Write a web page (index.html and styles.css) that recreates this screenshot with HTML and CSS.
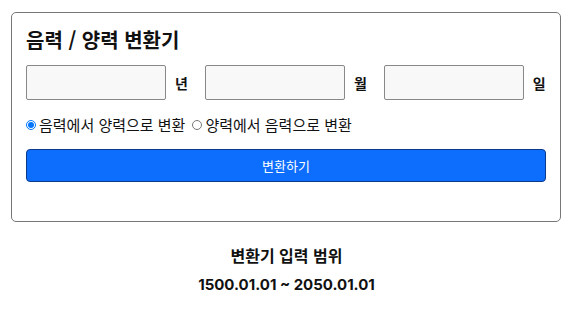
FILE: index.html
```html
<!DOCTYPE html>
<html lang="ko">
<head>
    <meta charset="UTF-8">
    <meta name="viewport" content="width=device-width, initial-scale=1.0">
    <title>음력 / 양력 변환기</title>
    <link rel="stylesheet" href="styles.css">
</head>
<body>
    <div class="container">
        <h2>음력 / 양력 변환기</h2>
        <form id="convertForm">
            <div class="date-row">
                <input type="text" class="date-input" id="year">
                <span class="unit">년</span>
                <input type="text" class="date-input" id="month">
                <span class="unit">월</span>
                <input type="text" class="date-input" id="day">
                <span class="unit">일</span>
            </div>
            <div class="radio-row">
                <label><input type="radio" name="mode" value="lunar" checked>음력에서 양력으로 변환</label>
                <label><input type="radio" name="mode" value="solar">양력에서 음력으로 변환</label>
            </div>
            <button type="submit" class="btn">변환하기</button>
        </form>
    </div>
    <div class="range">
        <h4>변환기 입력 범위</h4>
        <p>1500.01.01 ~ 2050.01.01</p>
    </div>
</body>
</html>
```

FILE: styles.css
```css
body {
    font-family: "Noto Sans CJK KR", "Noto Sans", sans-serif;
    margin: 0;
    color: #111;
}
.container {
    margin: 12px 12px 0 11px;
    padding: 13px 14px 39px 14px;
    border: 1px solid #777;
    border-radius: 5px;
}
.container h2 {
    font-size: 20px;
    font-weight: 700;
    margin: 0 0 11px 0;
    line-height: 28px;
}
.date-row {
    display: flex;
    align-items: center;
}
.date-input {
    width: 140px;
    height: 35px;
    box-sizing: border-box;
    border: 1px solid #888;
    border-radius: 2px;
    background: #f8f8f8;
    padding: 4px 6px;
}
.unit {
    font-weight: 700;
    font-size: 14px;
    margin: 0 17px 0 9px;
}
.unit:last-child {
    margin-right: 0;
}
.radio-row {
    display: flex;
    align-items: center;
    margin: 15px 0 14px 0;
    font-size: 15px;
    line-height: 20px;
}
.radio-row label {
    display: flex;
    align-items: center;
    margin-right: 7px;
}
.radio-row input {
    width: 10px;
    height: 10px;
    margin: 0 3px 0 0;
}
.btn {
    display: block;
    width: 100%;
    height: 33px;
    background-color: #0d6efd;
    color: white;
    border: 1px solid #0a3a8a;
    border-radius: 4px;
    font-family: "Noto Sans CJK KR", sans-serif;
    font-size: 13px;
    cursor: pointer;
}
.range {
    text-align: center;
    margin-top: 20px;
}
.range h4 {
    font-size: 16px;
    font-weight: 700;
    margin: 0;
    line-height: 26px;
}
.range p {
    font-family: "Inter", sans-serif;
    font-size: 15px;
    font-weight: 700;
    margin: 6px 0 0 0;
    line-height: 22px;
}
```
